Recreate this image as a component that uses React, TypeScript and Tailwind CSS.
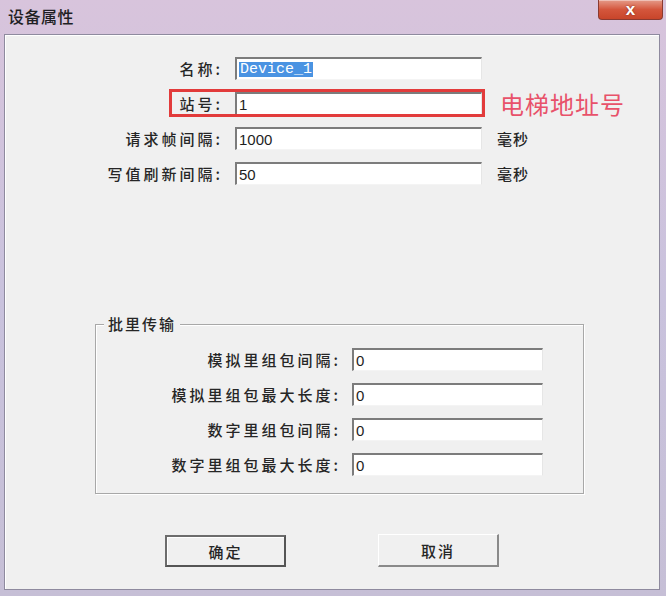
import React from "react";

const cjk = "font-['Noto_Sans_CJK_SC',sans-serif]";
const label = `${cjk} text-[15px] font-medium tracking-[3px] text-[#262626] leading-none text-right whitespace-nowrap`;
const input =
  "h-[23px] bg-white border-t-2 border-l-2 border-t-[#7c7c7c] border-l-[#7c7c7c] border-r border-b border-r-[#e6e6e6] border-b-[#f4f4f4] flex items-center pl-[2px] font-['Liberation_Sans',sans-serif] text-[15px] text-[#1e1e1e] leading-none";

function TopRow({
  name,
  value,
  suffix,
  children,
}: {
  name: string;
  value: React.ReactNode;
  suffix?: React.ReactNode;
  children?: React.ReactNode;
}) {
  return (
    <div className="relative flex items-center h-[23px]">
      <div className={`w-[218px] ${label}`}>{name}</div>
      <div className={`ml-[12px] w-[247px] ${input}`}>{value}</div>
      {suffix}
      {children}
    </div>
  );
}

function GroupRow({ name }: { name: string }) {
  return (
    <div className="flex items-center h-[23px]">
      <div className={`w-[245px] ${label}`}>{name}</div>
      <div className={`ml-[11px] w-[191px] ${input}`}>0</div>
    </div>
  );
}

export default function App() {
  return (
    <div className="w-[666px] h-[596px] flex flex-col bg-gradient-to-b from-[#d8c4dc] via-[#c9c2dd] to-[#c6bfd6] overflow-hidden">
      {/* title bar */}
      <div className="h-[34px] flex items-start justify-between shrink-0">
        <div className={`${cjk} ml-[8px] mt-[8px] text-[16px] font-medium text-[#1f1f24] tracking-[0.5px] leading-none`}>
          设备属性
        </div>
        <div className="mr-[3px] w-[65px] h-[20px] rounded-b-[4px] border border-t-0 border-[#8a3a30] bg-gradient-to-b from-[#e49a88] via-[#d4563c] to-[#c8452a] flex items-center justify-center shadow-[inset_0_1px_0_rgba(255,255,255,0.4)]">
          <span className="font-['Liberation_Sans',sans-serif] text-[17px] font-bold text-white leading-none [text-shadow:0_0_2px_#7a2010]">
            x
          </span>
        </div>
      </div>

      {/* content panel */}
      <div className="ml-[4px] mr-[6px] mb-[6px] flex-1 bg-[#f0f0f0] border border-[#8e8a9e] shadow-[inset_1px_1px_0_#ffffff] flex flex-col">
        <div className="flex flex-col gap-[12px] pt-[22px]">
          <TopRow
            name="名称:"
            value={
              <span className="px-[1px] bg-[#4a93e2] text-white font-['Liberation_Mono',monospace] text-[15px] leading-[15px]">
                Device_1
              </span>
            }
          />
          <TopRow
            name="站号:"
            value="1"
            suffix={
              <div className={`${cjk} ml-[18px] text-[24px] text-[#e8526a] leading-none tracking-[1px]`}>
                电梯地址号
              </div>
            }
          >
            <div className="absolute left-[164px] top-[-3px] w-[316px] h-[28px] border-[3px] border-[#e23b3b]" />
          </TopRow>
          <TopRow
            name="请求帧间隔:"
            value="1000"
            suffix={<div className={`${cjk} ml-[15px] text-[15px] font-medium tracking-[1px] text-[#262626] leading-none`}>毫秒</div>}
          />
          <TopRow
            name="写值刷新间隔:"
            value="50"
            suffix={<div className={`${cjk} ml-[15px] text-[15px] font-medium tracking-[1px] text-[#262626] leading-none`}>毫秒</div>}
          />
        </div>

        {/* group box */}
        <div className="relative ml-[90px] mt-[139px] w-[489px] h-[170px] border border-[#a8a8a8] shadow-[inset_1px_1px_0_#ffffff,1px_1px_0_#ffffff]">
          <div className={`absolute left-[8px] top-[-11px] px-[4px] bg-[#f0f0f0] ${cjk} text-[15px] font-medium tracking-[2px] text-[#262626] leading-[20px]`}>
            批里传输
          </div>
          <div className="flex flex-col gap-[12px] pt-[23px]">
            <GroupRow name="模拟里组包间隔:" />
            <GroupRow name="模拟里组包最大长度:" />
            <GroupRow name="数字里组包间隔:" />
            <GroupRow name="数字里组包最大长度:" />
          </div>
        </div>

        {/* buttons */}
        <div className="flex ml-[160px] mt-[41px] gap-[92px]">
          <div className="w-[121px] h-[32px] border-2 border-[#6c6c6c] border-r-[#555] border-b-[#555] bg-[#f0f0f0] shadow-[inset_1px_1px_0_#ffffff] flex items-center justify-center">
            <span className={`${cjk} text-[15px] font-medium tracking-[2px] text-[#262626] leading-none`}>确定</span>
          </div>
          <div className="w-[121px] h-[33px] -mt-[1px] border-t border-l border-t-[#ffffff] border-l-[#ffffff] border-r-2 border-b-2 border-r-[#8a8a8a] border-b-[#8a8a8a] bg-[#f0f0f0] flex items-center justify-center">
            <span className={`${cjk} text-[15px] font-medium tracking-[2px] text-[#262626] leading-none`}>取消</span>
          </div>
        </div>
      </div>
    </div>
  );
}
